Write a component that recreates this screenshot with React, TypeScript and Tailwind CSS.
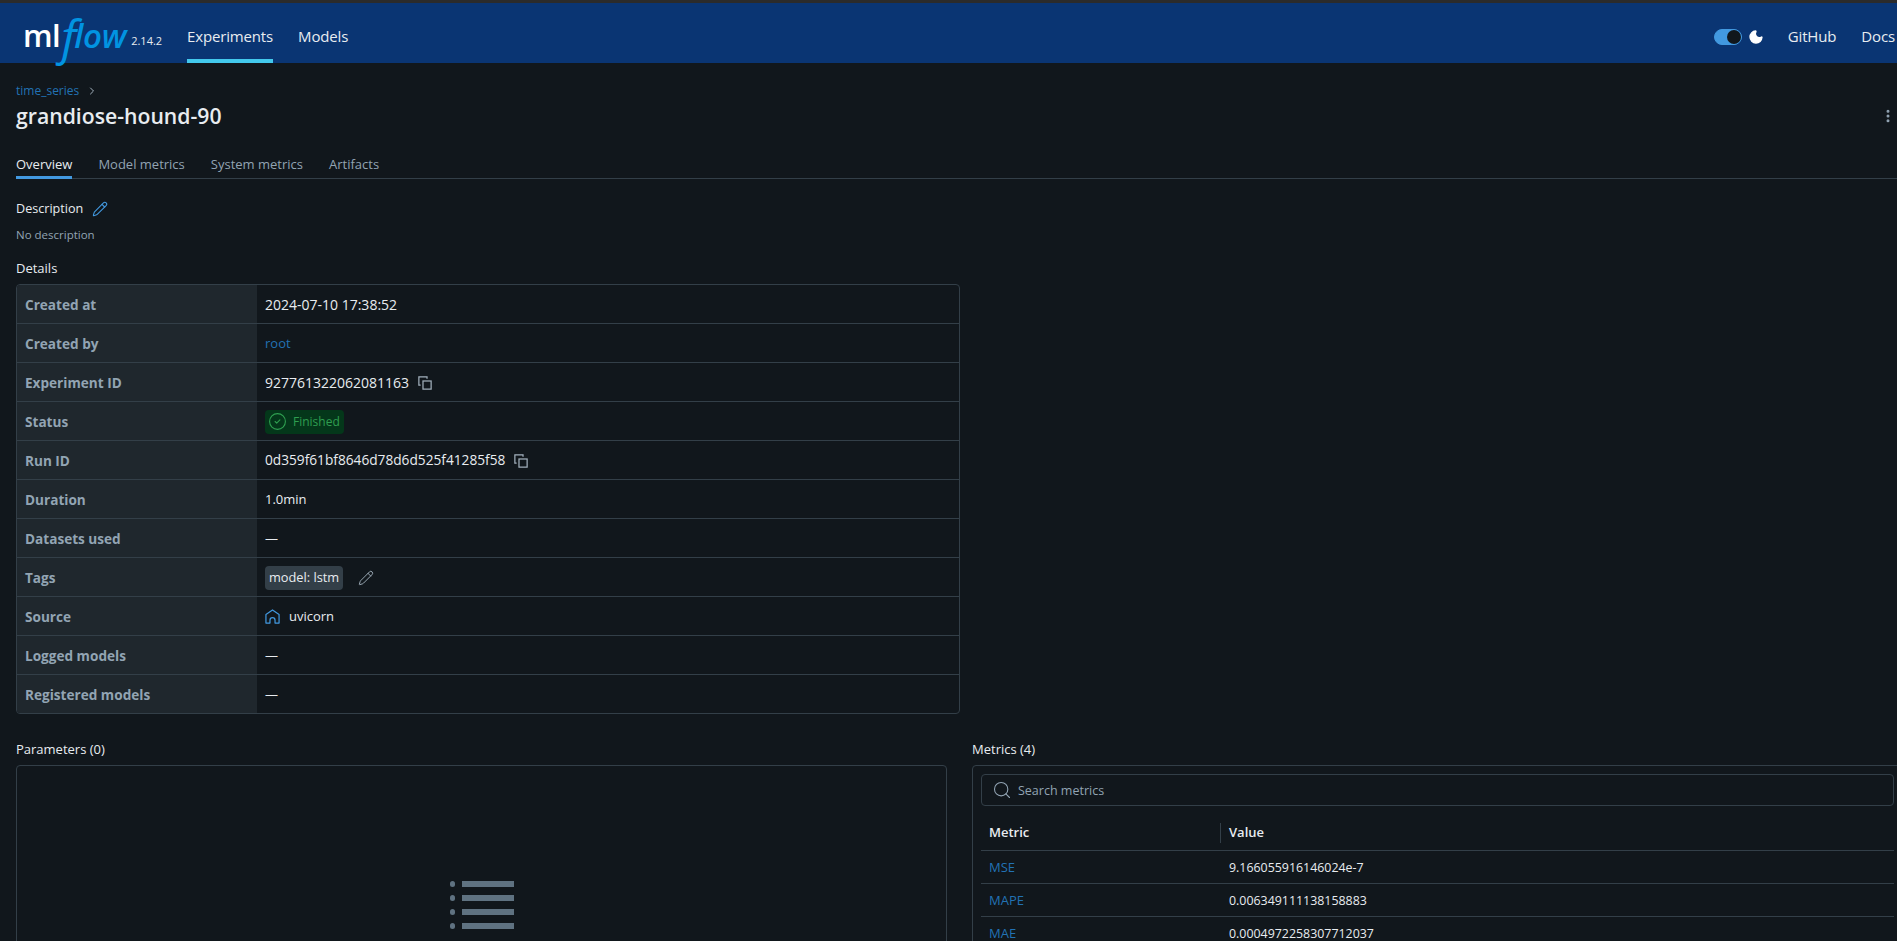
import React from "react";
import { Search, Moon, Pencil, EllipsisVertical, ChevronRight, CircleCheck } from "lucide-react";

const ff = "font-['Open_Sans','Noto_Sans',sans-serif]";

const CopyIcon = () => (
  <svg viewBox="0 0 16 16" fill="none" stroke="#a3b1bd" strokeWidth="1.4" className="ml-[9px] h-[14px] w-[14px]">
    <rect x="5.7" y="5.7" width="9.3" height="9.3" />
    <path d="M10.3 3V1H1v9.3h2" />
  </svg>
);

const HomeIcon = () => (
  <svg viewBox="0 0 16 16" fill="none" stroke="#4299e0" strokeWidth="1.3" strokeLinejoin="round" className="mr-[9px] h-[15px] w-[15px]">
    <path d="M1 15V5.8L8 1l7 4.8V15h-4.3v-3a2.7 2.7 0 0 0-5.4 0v3z" />
  </svg>
);

const details = [
  { label: "Created at", value: <span className="text-[14px]">2024-07-10 17:38:52</span> },
  { label: "Created by", value: <span className="text-[#2272b4]">root</span> },
  {
    label: "Experiment ID",
    value: (
      <>
        <span className="text-[14px]">927761322062081163</span>
        <CopyIcon />
      </>
    ),
  },
  {
    label: "Status",
    value: (
      <span className="flex h-[24px] w-[79px] items-center rounded-[4px] bg-[#04371a] pl-[3px] text-[12px] text-[#2f9e50]">
        <CircleCheck className="mr-[6px] h-[19px] w-[19px]" strokeWidth={1.4} />
        Finished
      </span>
    ),
  },
  {
    label: "Run ID",
    value: (
      <>
        <span className="text-[13.7px]">0d359f61bf8646d78d6d525f41285f58</span>
        <CopyIcon />
      </>
    ),
  },
  { label: "Duration", value: <span>1.0min</span> },
  { label: "Datasets used", value: <span>—</span> },
  {
    label: "Tags",
    value: (
      <>
        <span className="flex h-[24px] items-center rounded-[4px] bg-[#333f48] px-[4px] text-[12.8px]">model: lstm</span>
        <Pencil className="ml-[15px] h-[16px] w-[16px] text-[#a3b1bd]" strokeWidth={1.4} />
      </>
    ),
  },
  {
    label: "Source",
    value: (
      <>
        <HomeIcon />
        uvicorn
      </>
    ),
  },
  { label: "Logged models", value: <span>—</span> },
  { label: "Registered models", value: <span>—</span> },
];

const metrics = [
  { name: "MSE", value: "9.166055916146024e-7" },
  { name: "MAPE", value: "0.006349111138158883" },
  { name: "MAE", value: "0.0004972258307712037" },
];

export default function App() {
  return (
    <div className={`h-[941px] w-full overflow-hidden bg-[#11171c] text-[13px] text-[#e8ecf0] ${ff}`}>
      <div className="w-[1920px]">
        <div className="h-[3px] bg-[#2b2b2b]" />
        <header className="flex h-[60px] items-stretch bg-[#0a3573] text-[15px]">
          <div className="ml-[23px] flex w-[164px] items-center pt-[5px]">
            <span className="text-[31px] leading-none font-semibold tracking-[-0.5px] text-white">ml</span>
            <span className="relative top-[1px] ml-[1px] text-[48px] leading-none font-normal text-[#0194e2] italic">f</span>
            <span className="-ml-[2px] text-[33px] leading-none font-semibold tracking-[-0.3px] text-[#0194e2] italic">low</span>
            <span className="relative top-[6px] ml-[5px] text-[11px] text-[#e8ecf0]">2.14.2</span>
          </div>
          <nav className="flex">
            <span className="flex items-center border-b-[4px] border-[#43c9ed] pt-[11px] tracking-[-0.15px]">Experiments</span>
            <span className="ml-[25px] flex items-center border-b-[4px] border-transparent pt-[11px] tracking-[-0.15px]">Models</span>
          </nav>
          <div className="ml-auto flex items-center pr-[25px] pt-[7px]">
            <span className="flex h-[16px] w-[28px] items-center justify-end rounded-full border border-[#4299e0] bg-[#4299e0]">
              <span className="h-[14px] w-[14px] rounded-full bg-[#11171c]" />
            </span>
            <Moon className="ml-[6px] h-[16px] w-[16px] fill-white text-white" />
            <span className="ml-[24px] tracking-[-0.15px]">GitHub</span>
            <span className="ml-[25px] tracking-[-0.15px]">Docs</span>
          </div>
        </header>

        <main className="px-[16px]">
          <div className="mt-[17px] flex h-[20px] items-center pt-[1px] text-[12px] text-[#2272b4]">
            time_series
            <ChevronRight className="ml-[7px] h-[12px] w-[12px] text-[#a3b1bd]" />
          </div>
          <div className="flex h-[32px] items-center justify-between">
            <h1 className="text-[21.2px] leading-[28px] font-semibold">grandiose-hound-90</h1>
            <EllipsisVertical className="mr-[8px] h-[18px] w-[16px] text-[#92a4b3]" strokeWidth={2.5} />
          </div>
          <div className="-mr-[16px] mt-[18px] flex h-[29px] gap-[26px] border-b border-[#333f48] text-[#92a4b3]">
            <span className="-mb-px flex items-center border-b-[3px] border-[#4299e0] pt-[3px] text-[#e8ecf0]">Overview</span>
            <span className="flex items-center pt-[1px]">Model metrics</span>
            <span className="flex items-center pt-[1px]">System metrics</span>
            <span className="flex items-center pt-[1px]">Artifacts</span>
          </div>

          <div className="mt-[19px] flex h-[20px] items-center pt-[2px] text-[12.6px]">
            Description
            <Pencil className="ml-[9px] h-[16px] w-[16px] text-[#4299e0]" strokeWidth={1.6} />
          </div>
          <p className="mt-[8px] text-[11.5px] leading-[18px] text-[#92a4b3]">No description</p>
          <h2 className="mt-[14px] leading-[20px]">Details</h2>

          <div className="mt-[6px] w-[944px] overflow-hidden rounded-[4px] border border-[#333f48]">
            {details.map((row, i) => (
              <div key={row.label} className={i > 0 ? "flex h-[39px] border-t border-[#333f48]" : "flex h-[38px]"}>
                <div className="flex w-[240px] items-center bg-[#1f272d] pl-[8px] pt-[2px] text-[13.6px] font-bold text-[#92a4b3]">{row.label}</div>
                <div className="flex flex-1 items-center pl-[8px] pt-[1px]">{row.value}</div>
              </div>
            ))}
          </div>

          <div className="mt-[25px] grid w-[1887px] grid-cols-2 gap-[25px]">
            <section>
              <h2 className="leading-[20px]">Parameters (0)</h2>
              <div className="mt-[6px] flex h-[400px] justify-center rounded-[4px] border border-[#333f48] pt-[115px]">
                <div className="flex h-[48px] flex-col gap-[8px]">
                  {[0, 1, 2, 3].map((n) => (
                    <div key={n} className="flex items-center gap-[7px]">
                      <span className="h-[6px] w-[5px] rounded-full bg-[#5f7281]" />
                      <span className="h-[6px] w-[52px] bg-[#5f7281]" />
                    </div>
                  ))}
                </div>
              </div>
            </section>
            <section>
              <h2 className="leading-[20px]">Metrics (4)</h2>
              <div className="mt-[6px] h-[400px] rounded-[4px] border border-[#333f48] px-[8px] pt-[8px]">
                <div className="flex h-[32px] items-center rounded-[4px] border border-[#333f48] pl-[10px] text-[12.5px] text-[#92a4b3]">
                  <Search className="mr-[6px] h-[20px] w-[20px]" strokeWidth={1.3} />
                  <span className="pt-[2px]">Search metrics</span>
                </div>
                <div className="mt-[8px] flex h-[37px] items-center border-b border-[#333f48] pt-[1px] font-semibold">
                  <span className="w-[239px] pl-[8px]">Metric</span>
                  <span className="flex h-[20px] items-center border-l border-[#333f48] pl-[8px] font-semibold">Value</span>
                </div>
                {metrics.map((m) => (
                  <div key={m.name} className="flex h-[33px] items-center border-b border-[#333f48] pt-[1px]">
                    <span className="w-[239px] pl-[8px] text-[#2272b4]">{m.name}</span>
                    <span className="pl-[9px] pt-[1px] text-[12.4px]">{m.value}</span>
                  </div>
                ))}
              </div>
            </section>
          </div>
        </main>
      </div>
    </div>
  );
}
